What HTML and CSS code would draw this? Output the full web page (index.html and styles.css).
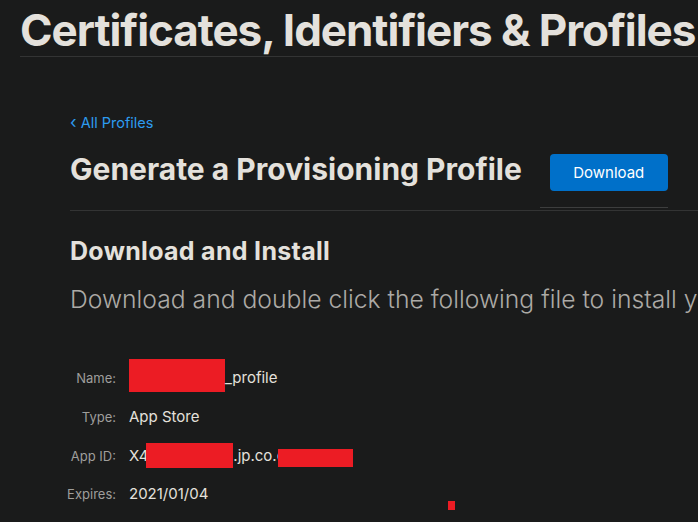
FILE: index.html
```html
<!DOCTYPE html>
<html lang="en">
<head>
<meta charset="utf-8">
<title>Certificates, Identifiers &amp; Profiles</title>
<link rel="stylesheet" href="styles.css">
</head>
<body>
<header class="top">
  <h1 class="top-title">Certificates, Identifiers &amp; Profiles</h1>
</header>
<main class="main">
  <a class="back" href="#"><span class="chev">‹</span> All Profiles</a>
  <div class="title-row">
    <h2 class="page-title">Generate a Provisioning Profile</h2>
    <div class="btn-wrap"><button class="btn">Download</button></div>
  </div>
  <section class="install">
    <h3 class="sec-title">Download and Install</h3>
    <p class="lead">Download and double click the following file to install y</p>
    <dl class="info">
      <div class="row"><dt>Name:</dt><dd><span class="redact r-name"></span>_profile</dd></div>
      <div class="row"><dt>Type:</dt><dd>App Store</dd></div>
      <div class="row"><dt>App ID:</dt><dd>X4<span class="redact r-id"></span>.jp.co.c<span class="redact r-bundle"></span></dd></div>
      <div class="row"><dt>Expires:</dt><dd>2021/01/04</dd><span class="redact r-dot"></span></div>
    </dl>
  </section>
</main>
</body>
</html>
```
FILE: styles.css
```css
html, body {
  margin: 0;
  padding: 0;
  background: #1a1b1b;
  overflow: hidden;
}
body {
  font-family: Inter, "Noto Sans", sans-serif;
  color: #e4e1dc;
  width: 698px;
  height: 522px;
}
.top {
  margin-left: 20px;
  border-bottom: 1px solid #333434;
  height: 56px;
  white-space: nowrap;
  overflow: hidden;
}
.top-title {
  margin: 0;
  padding-top: 4px;
  font-size: 44px;
  font-weight: 700;
  letter-spacing: -1.05px;
  line-height: 52px;
  color: #e4e1dc;
}
.main {
  padding-left: 70px;
}
.back {
  display: block;
  margin-top: 56px;
  font-size: 14.5px;
  line-height: 18px;
  color: #2d9bf0;
  text-decoration: none;
}
.chev {
  font-size: 17px;
}
.title-row {
  display: flex;
  align-items: flex-start;
  border-bottom: 1px solid #333434;
  height: 78px;
}
.page-title {
  margin: 19px 0 0 0;
  font-size: 30px;
  font-weight: 700;
  line-height: 36px;
  white-space: nowrap;
}
.btn-wrap {
  margin-left: 18px;
  padding: 22px 0 16px 10px;
  border-bottom: 1px solid #3d3e3e;
}
.btn {
  display: block;
  width: 118px;
  height: 37px;
  border: 0;
  border-radius: 4px;
  background: #0070c9;
  color: #fff;
  font-family: Inter, sans-serif;
  font-size: 15px;
}
.sec-title {
  margin: 26px 0 0 0;
  font-size: 25px;
  font-weight: 700;
  letter-spacing: 0.3px;
  line-height: 28px;
}
.lead {
  margin: 18px 0 0 0;
  font-size: 24.7px;
  font-weight: 300;
  line-height: 32px;
  color: #acaaa6;
  white-space: nowrap;
}
.info {
  margin: 44px 0 0 -70px;
}
.row {
  display: grid;
  grid-template-columns: 116px auto;
  column-gap: 13px;
  align-items: center;
  height: 38.67px;
  position: relative;
}
.row dt {
  text-align: right;
  font-size: 13px;
  line-height: 18px;
  color: #9f9e9b;
}
.row dd {
  margin: 0;
  display: flex;
  align-items: center;
  height: 20px;
  font-size: 15px;
  line-height: 20px;
  color: #e4e1dc;
  white-space: pre;
}
.redact {
  display: block;
  flex: none;
  background: #ec1c24;
}
.r-name { width: 96px; height: 33px; margin-top: -5px; }
.r-id { width: 87px; height: 25px; margin-left: -2px; }
.r-bundle { width: 75px; height: 18px; margin-left: -7px; margin-top: 4px; }
.r-dot {
  position: absolute;
  left: 448px;
  top: 26px;
  width: 7px;
  height: 9px;
}
```
